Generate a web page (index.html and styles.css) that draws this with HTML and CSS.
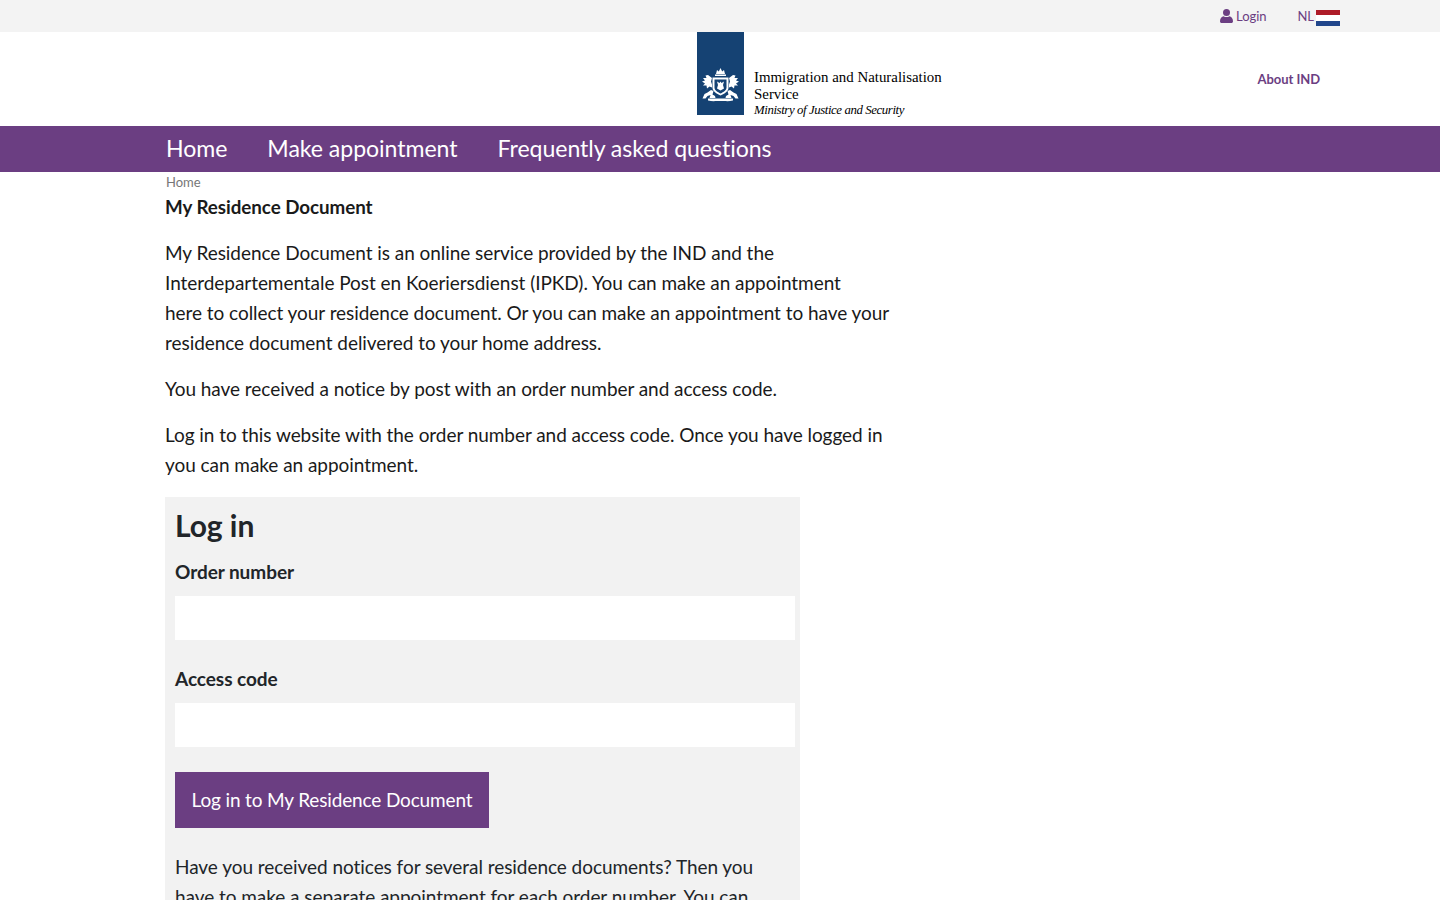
FILE: index.html
```html
<!DOCTYPE html>
<html lang="en">
<head>
<meta charset="utf-8">
<title>My Residence Document</title>
<link rel="stylesheet" href="styles.css">
</head>
<body>
<div class="topbar">
  <div class="topbar-inner">
    <a class="top-link login" href="#">
      <svg class="user-icon" viewBox="0 0 13 14" width="13" height="14"><circle cx="6.5" cy="3.6" r="3.5"/><path d="M0 12.2C0 9 1.8 7.4 3.6 7.2c.9.6 1.8.9 2.9.9s2-.3 2.9-.9C11.2 7.4 13 9 13 12.2 13 13.3 12.3 14 11.3 14H1.7C.7 14 0 13.3 0 12.2z"/></svg>
      <span>Login</span>
    </a>
    <a class="top-link lang" href="#">
      <span>NL</span>
      <span class="flag"><i class="flag-r"></i><i class="flag-w"></i><i class="flag-b"></i></span>
    </a>
  </div>
</div>
<header class="header">
  <div class="header-inner">
    <a class="logo" href="#">
      <svg class="emblem" viewBox="0 0 47 83" width="47" height="83">
        <rect width="47" height="83" fill="#154273"/>
        <g fill="#fff">
          <path d="M19 42l1-4 1.800 1.600L23.500 36l1.700 3.600L27 38l1 4z"/>
          <rect x="18" y="42.500" width="11" height="1.500"/>
          <path d="M15.500 45.500h16v10c0 4-4 6-8 8-4-2-8-4-8-8z"/>
          <path d="M15 46l-4-3-2.500.5 1 2.500-3.500 0 2 2.500-3 1 3 2-2 2 3.500 0 .5 3 2.500-2 2.500 1v-3l-1-3z"/>
          <path d="M32 46l4-3 2.500.5-1 2.500 3.500 0-2 2.500 3 1-3 2 2 2-3.500 0-.5 3-2.500-2-2.500 1v-3l1-3z"/>
          <path d="M14 58l2.500 1-1 3.500 2.500 1.500.5 2h-6l1-3-3 1-2 2.500H5.500l2-4.500 3-1.500zM33 58l-2.500 1 1 3.500-2.500 1.500-.5 2h6l-1-3 3 1 2 2.500h3l-2-4.500-3-1.500z"/>
          <path d="M11 66.500h25v2c-4 1-7 .5-12.500.5s-8.500.5-12.500-.5z"/>
        </g>
        <path d="M17.500 47.500h12v8c0 2.800-3 4.500-6 6-3-1.500-6-3.200-6-6z" fill="#154273"/>
        <path d="M20 49.500l2.500 1.500 1-1.500 1 1.500 2.500-1.500-1 3.500 1 3.500-3.500 2-3.500-2 1-3.500z" fill="#fff"/>
      </svg>
      <span class="logo-text">
        <span class="logo-name">Immigration and Naturalisation<br>Service</span>
        <em class="logo-sub">Ministry of Justice and Security</em>
      </span>
    </a>
    <a class="about" href="#">About IND</a>
  </div>
</header>
<nav class="nav">
  <div class="nav-inner">
    <a href="#">Home</a>
    <a href="#">Make appointment</a>
    <a href="#">Frequently asked questions</a>
  </div>
</nav>
<main class="main">
  <div class="breadcrumb">Home</div>
  <h1 class="title">My Residence Document</h1>
  <p>My Residence Document is an online service provided by the IND and the Interdepartementale Post en Koeriersdienst (IPKD). You can make an appointment<br>here to collect your residence document. Or you can make an appointment to have your residence document delivered to your home address.</p>
  <p>You have received a notice by post with an order number and access code.</p>
  <p>Log in to this website with the order number and access code. Once you have logged in you can make an appointment.</p>
  <section class="panel">
    <h2 class="panel-title">Log in</h2>
    <label class="label" for="order">Order number</label>
    <input class="field" id="order" type="text">
    <label class="label" for="code">Access code</label>
    <input class="field" id="code" type="text">
    <button class="submit" type="button">Log in to My Residence Document</button>
    <p class="note">Have you received notices for several residence documents? Then you have to make a separate appointment for each order number. You can</p>
  </section>
</main>
</body>
</html>
```
FILE: styles.css
```css
* { box-sizing: border-box; }
html, body { height: 900px; overflow: hidden; }
body {
  margin: 0;
  background: #fff;
  color: #1a1a1a;
  font-family: Lato, sans-serif;
  font-size: 19px;
  letter-spacing: -.05px;
  line-height: 30px;
}
a { text-decoration: none; color: inherit; }
.topbar { height: 32px; background: #f3f3f3; }
.topbar-inner {
  width: 1240px;
  height: 32px;
  margin: 0 auto;
  display: flex;
  justify-content: flex-end;
  align-items: center;
  gap: 31px;
  font-size: 13px;
  color: #6b3e82;
}
.top-link { display: flex; align-items: center; line-height: 16px; }
.login { gap: 3px; }
.lang { gap: 2px; }
.user-icon { fill: #6b3e82; }
.flag { display: flex; flex-direction: column; width: 24px; height: 16px; margin-top: 4px; }
.flag i { display: block; flex: 1; }
.flag-r { background: #ae1c28; }
.flag-w { background: #fff; }
.flag-b { background: #21468b; }
.header { height: 94px; }
.header-inner {
  width: 1240px;
  height: 94px;
  margin: 0 auto;
  display: flex;
  justify-content: space-between;
  padding-left: 597px;
  padding-right: 20px;
}
.logo { display: flex; align-items: flex-start; gap: 10px; color: #000; }
.emblem { display: block; flex: none; }
.logo-text { display: flex; flex-direction: column; padding-top: 37px; font-family: "Liberation Serif", serif; font-size: 14.900px; line-height: 16.500px; letter-spacing: 0; }
.logo-name { display: block; }
.logo-sub { font-size: 12.800px; letter-spacing: -.4px; }
.about { align-self: center; font-size: 13px; font-weight: 700; color: #6b3e82; line-height: 16px; }
.nav { height: 46px; background: #6b3e82; }
.nav-inner { width: 1140px; height: 46px; margin: 0 auto; padding: 0 0 1px 16px; display: flex; align-items: center; gap: 40px; color: #fff; font-size: 23.100px; line-height: 45px; }
.main { width: 1140px; margin: 0 auto; padding: 0 15px; }
.breadcrumb { height: 20px; padding-left: 1px; font-size: 13px; line-height: 20px; color: #777; }
.title { margin: 0 0 16px; font-size: 18.800px; line-height: 30px; font-weight: 700; color: #1a1a1a; }
.main > p { width: 730px; margin: 0 0 16px; }
.panel { width: 635px; margin-top: 17px; background: #f2f2f2; padding: 9px 5px 0 10px; }
.panel-title { margin: 0 0 14px; font-size: 30px; line-height: 38px; font-weight: 700; color: #212529; }
.label { display: block; margin-bottom: 11px; font-size: 19px; line-height: 27px; font-weight: 700; color: #212529; }
.field { display: block; width: 620px; height: 44px; margin-bottom: 25px; border: 0; background: #fff; }
.submit { display: block; width: 314px; height: 56px; padding: 0; border: 0; background: #6b3e82; color: #fff; font: inherit; letter-spacing: -.15px; }
.note { margin: 24px 0 0; color: #212529; }
```
